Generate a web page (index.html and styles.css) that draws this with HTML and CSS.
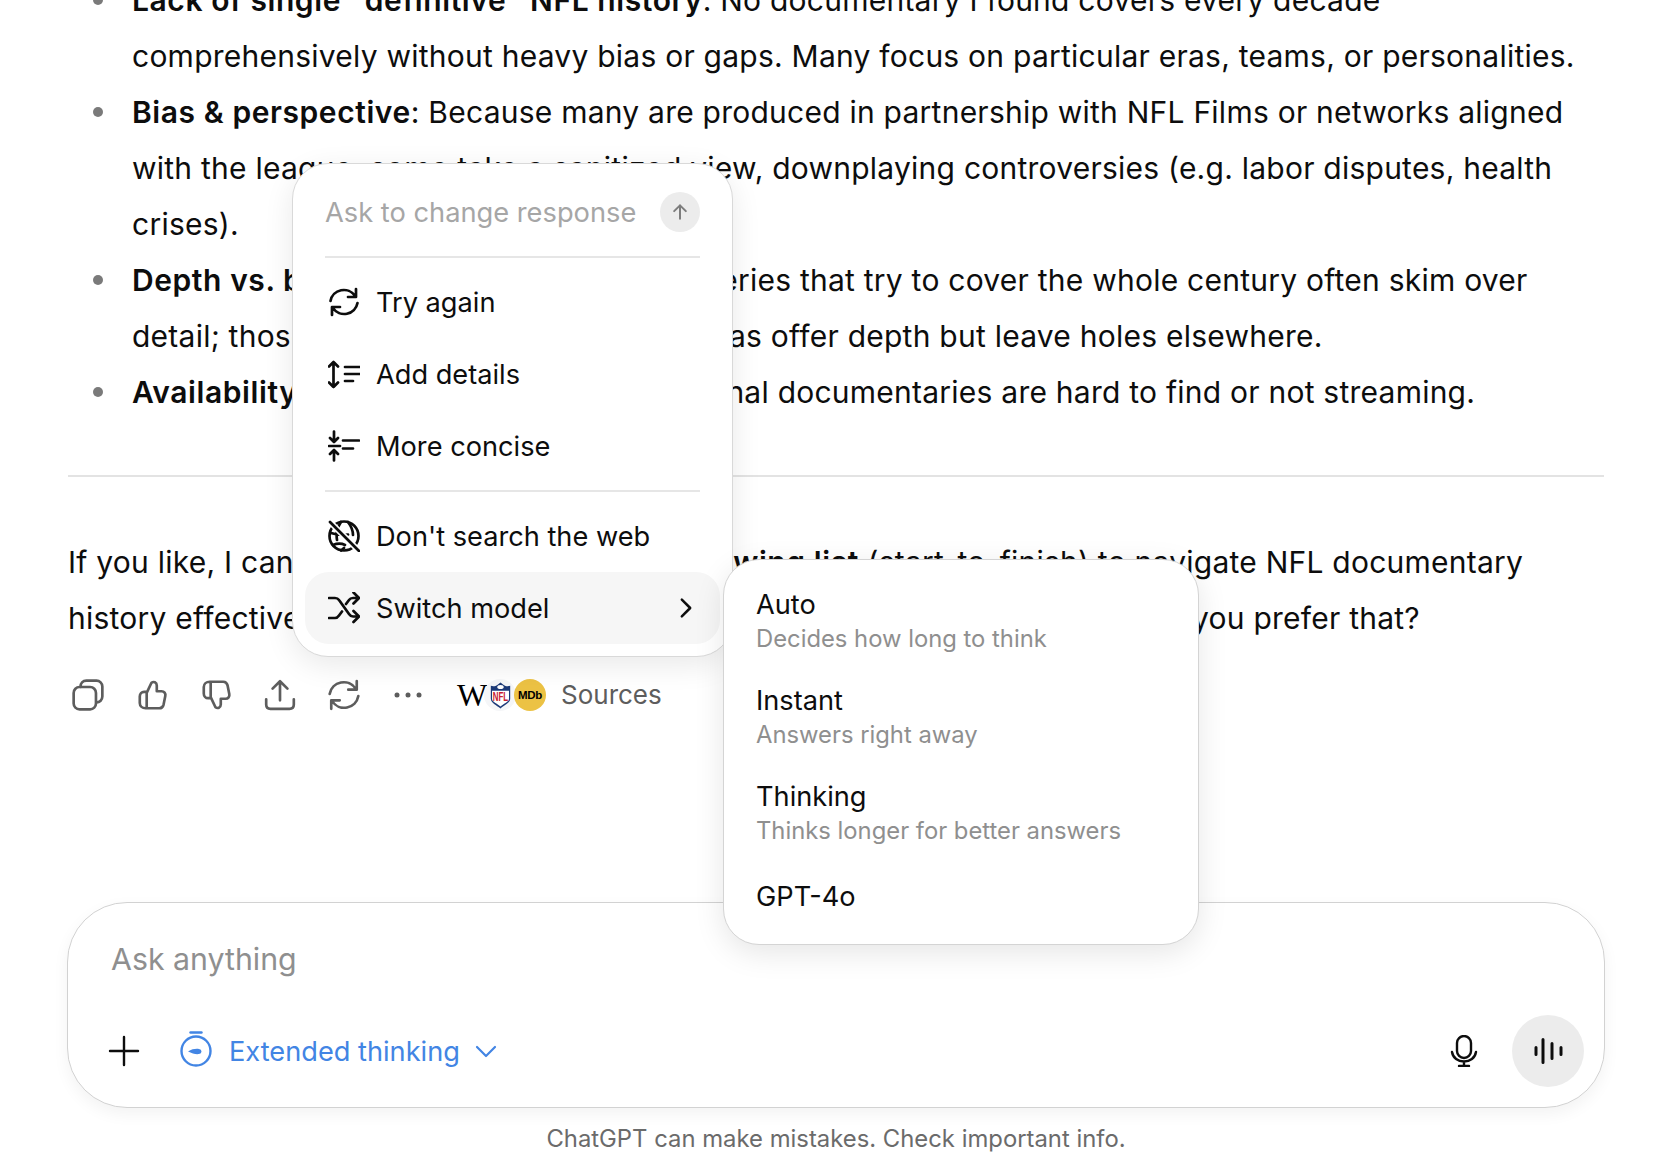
FILE: index.html
```html
<!DOCTYPE html>
<html lang="en">
<head>
<meta charset="utf-8">
<title>ChatGPT</title>
<link rel="stylesheet" href="styles.css">
</head>
<body>
<div class="page">
  <main class="thread">
    <ul class="list">
      <li><b>Lack of single "definitive" NFL history</b>: No documentary I found covers every decade<br>comprehensively without heavy bias or gaps. Many focus on particular eras, teams, or personalities.</li>
      <li><b>Bias &amp; perspective</b>: Because many are produced in partnership with NFL Films or networks aligned<br>with the league, some take a sanitized view, downplaying controversies (e.g. labor disputes, health<br>crises).</li>
      <li><b>Depth vs. breadth</b>: Long, sweeping TV series that try to cover the whole century often skim over<br>detail; those focused on elite teams, or eras offer depth but leave holes elsewhere.</li>
      <li><b>Availability</b>: Some old, rarer, or international documentaries are hard to find or not streaming.</li>
    </ul>
    <hr class="rule">
    <p class="para">If you like, I can put together a customized <b>viewing list</b> (start-to-finish) to navigate NFL documentary<br>history effectively, arranged by era and theme with links for every title. Would you prefer that?</p>
    <div class="actions">
      <span class="act"><svg class="ic" viewBox="0 0 32 32"><rect x="2.500" y="8.500" width="21" height="21" rx="5.500"/><path d="M9 8.500V8c0-3 2-5.500 5.500-5.500h9.500c3 0 5.500 2.500 5.500 5.500v9.500c0 3-2.500 5.500-5.500 5.500"/></svg></span>
      <span class="act"><svg class="ic" viewBox="0 0 32 32"><path d="M11 14 15.500 4.500c2-1.500 5-.5 5 2.500v5.500h4.500c2.500 0 4 2 3.500 4.500l-1.600 8c-.5 2-2 3.500-4 3.500H10c-3 0-5.500-2-5.500-5v-6c0-2.500 1.800-4.500 4-4.500H11V28.500"/></svg></span>
      <span class="act"><svg class="ic flip" viewBox="0 0 32 32"><path d="M11 14 15.500 4.500c2-1.500 5-.5 5 2.500v5.500h4.500c2.500 0 4 2 3.500 4.500l-1.600 8c-.5 2-2 3.500-4 3.500H10c-3 0-5.500-2-5.500-5v-6c0-2.500 1.800-4.500 4-4.500H11V28.500"/></svg></span>
      <span class="act"><svg class="ic" viewBox="0 0 32 32"><path d="M16 21V3.500M9 10l7-7 7 7M3 20v5c0 2.500 1.500 4 4 4h18c2.500 0 4-1.500 4-4v-5"/></svg></span>
      <span class="act"><svg class="ic" viewBox="0 0 32 32"><path d="M2.500 15A13.500 13.500 0 0 1 27 10M28 3v8h-8M29.500 17A13.500 13.500 0 0 1 5 22M4 29v-8h8"/></svg></span>
      <span class="act"><svg class="ic dots" viewBox="0 0 32 32"><circle cx="5" cy="16" r="2.500"/><circle cx="16" cy="16" r="2.500"/><circle cx="27" cy="16" r="2.500"/></svg></span>
      <span class="sources">
        <span class="src src-w">W</span>
        <span class="src src-nfl">
          <svg class="shield" viewBox="0 0 26 32"><path class="shield-b" d="M1 4c3 1 6 .5 8-1l4-3 4 3c2 1.500 5 2 8 1v16c0 5-7 8-12 12C8 28 1 25 1 20z"/><path class="shield-w" d="M2.500 10h21v10c0 4-6.500 6-10.500 9.500C9 26 2.500 24 2.500 20z"/><ellipse class="ball" cx="13" cy="5.500" rx="4" ry="2.500"/><text class="nfl" x="3.500" y="23" textLength="19" lengthAdjust="spacingAndGlyphs">NFL</text></svg>
        </span>
        <span class="src src-m">MDb</span>
        <span class="src-label">Sources</span>
      </span>
    </div>
  </main>

  <section class="composer">
    <div class="placeholder">Ask anything</div>
    <div class="tools">
      <svg class="ic plus" viewBox="0 0 32 32"><path d="M16 2v28M2 16h28"/></svg>
      <svg class="ic timer" viewBox="0 0 32 36"><circle cx="16" cy="20" r="14.500"/><path d="M10.500 1.500h11"/><path class="needle" d="M8 20.500C12 18 16 17.500 19 18a2.500 2.500 0 0 1 0 5C16 23.500 12 22.500 8 20.500z"/></svg>
      <span class="ext">Extended thinking</span>
      <svg class="ic chev" viewBox="0 0 24 24"><path d="M3 8l9 9 9-9"/></svg>
      <span class="spacer"></span>
      <svg class="ic mic" viewBox="0 0 32 32"><rect x="9" y="1" width="14" height="22" rx="7"/><path d="M4 17c1 6 6 9.500 12 9.500S27 23 28 17M16 26.500V31M11 31h10"/></svg>
      <span class="voice"><svg class="ic bars" viewBox="0 0 32 32"><path d="M4 12.500v7M11 4.500v23M20 8.500v15M29 12.500v7"/></svg></span>
    </div>
  </section>
  <footer class="note">ChatGPT can make mistakes. Check important info.</footer>

  <div class="menu">
    <div class="ask"><span class="ask-text">Ask to change response</span><span class="send"><svg class="ic up" viewBox="0 0 24 24"><path d="M12 20V4M5 11l7-7 7 7"/></svg></span></div>
    <div class="sep sep-first"></div>
    <div class="item"><svg class="ic mi" viewBox="0 0 32 32"><path d="M2.500 15A13.500 13.500 0 0 1 27 10M28 3v8h-8M29.500 17A13.500 13.500 0 0 1 5 22M4 29v-8h8"/></svg>Try again</div>
    <div class="item"><svg class="ic mi" viewBox="0 0 32 32"><path d="M5.500 4v25M1 8.500 5.500 4 10 8.500M1 24.500 5.500 29l4.500-4.500M17 9h15M17 16h15M17 23h8"/></svg>Add details</div>
    <div class="item"><svg class="ic mi" viewBox="0 0 32 32"><path d="M6 1.500V12M2 8l4 4 4-4M6 30.500V20M2 24l4-4 4 4M1 16h11M15 10.500h16M15 18.500h10"/></svg>More concise</div>
    <div class="sep"></div>
    <div class="item"><svg class="ic mi" viewBox="0 0 32 32"><circle cx="16" cy="16" r="14.500"/><path d="M3 13c8 2.500 12 2.500 17 1.500M13 2c-4 6-5 12-4 18M20 2c3 4 5 9 5 13M5 25c5-2 8-2 12 0M16 28c-1 1-2 2-3 2.500"/><path class="slash-gap" d="M1 1 31 31"/><path d="M2 2 31 31"/></svg>Don't search the web</div>
    <div class="item active"><svg class="ic mi" viewBox="0 0 32 32"><path d="M1 6h6c2 0 3 .5 4 2l10 14c1 1.500 2 2.500 4 2.500h6M1 26h6c2 0 3-1 4-2.500l3-4M18 12l3-4c1-1.500 2-2 4-2h6M25.500 .5 31 6l-5.500 5.500M25.500 19 31 24.500 25.500 30"/></svg>Switch model<svg class="ic chev-r" viewBox="0 0 24 24"><path d="M7 2l10 10-10 10"/></svg></div>
  </div>

  <div class="submenu">
    <div class="model"><div class="m-title">Auto</div><div class="m-sub">Decides how long to think</div></div>
    <div class="model"><div class="m-title">Instant</div><div class="m-sub">Answers right away</div></div>
    <div class="model"><div class="m-title">Thinking</div><div class="m-sub">Thinks longer for better answers</div></div>
    <div class="model single"><div class="m-title">GPT-4o</div></div>
  </div>
</div>
</body>
</html>
```
FILE: styles.css
```css
* { box-sizing: border-box; }
html, body { margin: 0; padding: 0; background: #fff; }
body { font-family: Inter, "Liberation Sans", sans-serif; color: #0d0d0d; }
.page { position: relative; width: 1677px; height: 1170px; overflow: hidden; display: flex; flex-direction: column; }
.thread { flex: 1; padding: 0 73px 0 68px; font-size: 30px; line-height: 56px; min-height: 0; letter-spacing: .24px; }
.thread b { font-weight: 600; letter-spacing: .58px; }
.list { margin: -28px 0 0; padding: 0 0 0 64px; white-space: nowrap; list-style: none; }
.list li { position: relative; }
.list li::before { content: ""; position: absolute; left: -39px; top: 23px; width: 10px; height: 10px; border-radius: 50%; background: #7a7a7a; }
.rule { border: 0; height: 2px; background: #e3e3e3; margin: 55px 0 57px; }
.para { margin: 0; white-space: nowrap; }
.actions { display: flex; align-items: center; margin-top: 17px; height: 64px; margin-left: -12px; letter-spacing: 0; }
.act { width: 64px; height: 64px; flex: none; display: flex; align-items: center; justify-content: center; }
.ic { fill: none; stroke: currentColor; stroke-width: 2.400; stroke-linecap: round; stroke-linejoin: round; width: 32px; height: 32px; flex: none; display: block; }
.act .ic { color: #5d5d5d; stroke-width: 2.500; width: 34px; height: 34px; }
.act .dots { fill: #5d5d5d; stroke: none; width: 32px; height: 32px; }
.flip { transform: rotate(180deg) scaleX(-1); }
.sources { display: flex; align-items: center; margin-left: 16px; }
.src { display: flex; align-items: center; justify-content: center; flex: none; }
.src-w { font-family: "Liberation Serif", serif; font-size: 32px; width: 32px; color: #000; }
.src-nfl { width: 32px; height: 32px; border-radius: 50%; background: #f5f6f8; margin-left: -4px; }
.shield { width: 21px; height: 27px; display: block; }
.shield-b { fill: #1c3a78; }
.shield-w { fill: #fff; }
.ball { fill: #fff; }
.nfl { font-family: "Liberation Sans", sans-serif; font-size: 16px; font-weight: 700; fill: #c8202f; letter-spacing: 0; }
.src-m { width: 32px; height: 32px; border-radius: 50%; background: #ecc244; font-size: 11.500px; font-weight: 700; color: #000; margin-left: -2px; letter-spacing: -.3px; font-family: "Liberation Sans", sans-serif; }
.src-label { font-size: 26px; color: #5d5d5d; margin-left: 15px; line-height: 32px; }
.composer { flex: none; margin: 0 72px 0 67px; height: 206px; border: 1.500px solid #d2d2d2; border-radius: 60px; background: #fff; padding: 28px 20px 19px 40px; box-shadow: 0 6px 16px rgba(0,0,0,.05); }
.placeholder { font-size: 30.300px; line-height: 56px; color: #8f8f8f; padding-left: 3px; margin-bottom: 28px; }
.tools { display: flex; align-items: center; height: 72px; }
.plus { color: #0d0d0d; margin-right: 40px; }
.timer, .chev, .ext { color: #4285e4; }
.timer { margin-right: 17px; margin-top: -4px; height: 36px; }
.needle { fill: #4285e4; stroke: none; }
.ext { font-size: 27.200px; line-height: 40px; margin-top: 2px; }
.chev { width: 24px; height: 24px; margin-left: 14px; stroke-width: 2.200; }
.spacer { flex: 1; }
.mic { margin-right: 32px; }
.voice { width: 72px; height: 72px; border-radius: 50%; background: #ececec; display: flex; align-items: center; justify-content: center; }
.bars { stroke-width: 3; }
.note { flex: none; height: 62px; text-align: center; font-size: 23.850px; line-height: 62px; color: #6b6b6b; margin-right: 5px; }
.menu { position: absolute; left: 292px; top: 163px; width: 441px; height: 494px; background: #fff; border: 1px solid #d9d9d9; border-radius: 36px; padding: 0 12px 12px; box-shadow: 0 8px 30px rgba(0,0,0,.09); z-index: 1; }
.ask { height: 92px; padding: 3px 20px 0 20px; display: flex; align-items: center; justify-content: space-between; font-size: 27.250px; color: #a6a6a6; }
.ask-text { margin-top: 2px; }
.send { width: 40px; height: 40px; border-radius: 50%; background: #ececec; display: flex; align-items: center; justify-content: center; color: #7d7d7d; }
.up { width: 20px; height: 20px; }
.sep { height: 2px; background: #e6e6e6; margin: 8px 20px 8px; }
.sep-first { margin: 0 20px 8px; }
.item { height: 72px; display: flex; align-items: center; padding: 0 24px 0 23px; font-size: 27.200px; border-radius: 24px; color: #0d0d0d; }
.item .ic { stroke-width: 2.700; }
.mi { margin-right: 16px; }
.slash-gap { stroke: #fff; stroke-width: 6; }
.active { background: #f6f6f6; }
.item .chev-r { margin-left: auto; width: 20px; height: 24px; stroke-width: 3; }
.submenu { position: absolute; left: 723px; top: 559px; width: 476px; height: 386px; background: #fff; border: 1px solid #d4d4d4; border-radius: 36px; padding: 14px 32px 12px; box-shadow: 0 8px 30px rgba(0,0,0,.1); z-index: 2; }
.model { height: 96px; padding-bottom: 2px; display: flex; flex-direction: column; justify-content: center; }
.model.single { height: 69px; padding-bottom: 0; }
.m-title { font-size: 27.200px; line-height: 35px; }
.m-sub { font-size: 23.800px; line-height: 34px; color: #8f8f8f; }
```
